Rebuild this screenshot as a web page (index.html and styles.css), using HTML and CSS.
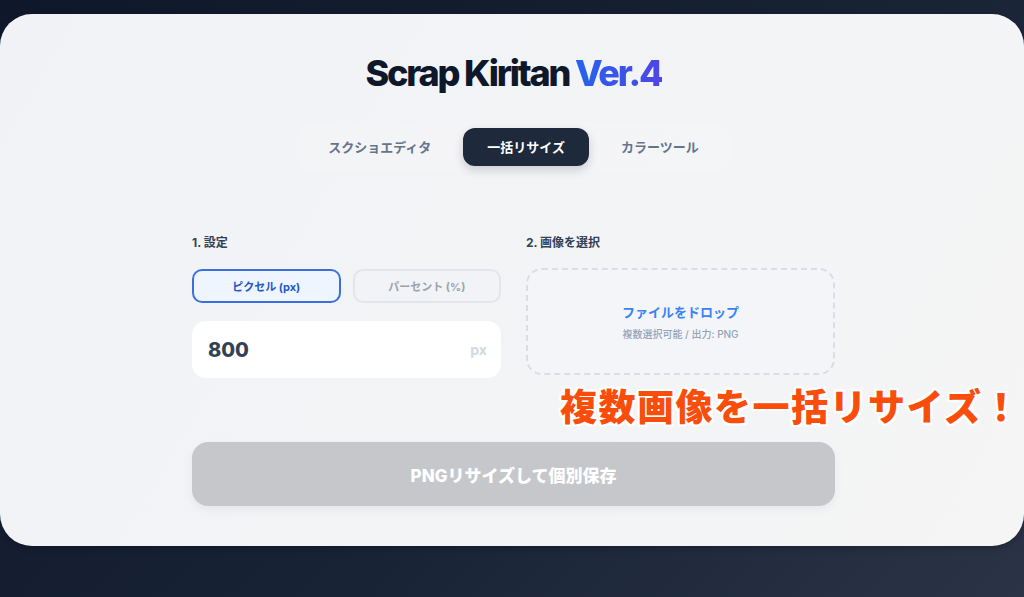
FILE: index.html
```html
<!DOCTYPE html>
<html lang="ja">
<head>
<meta charset="utf-8">
<title>Scrap Kiritan Ver.4</title>
<link rel="stylesheet" href="styles.css">
</head>
<body>
<main class="card">
  <h1 class="title">Scrap Kiritan <span class="ver">Ver.4</span></h1>
  <nav class="tabs">
    <button class="tab">スクショエディタ</button>
    <button class="tab tab-active">一括リサイズ</button>
    <button class="tab">カラーツール</button>
  </nav>
  <section class="grid">
    <div class="col">
      <div class="label">1. 設定</div>
      <div class="toggles">
        <button class="toggle toggle-on">ピクセル (px)</button>
        <button class="toggle">パーセント (%)</button>
      </div>
      <div class="input">
        <span class="input-value">800</span>
        <span class="input-unit">px</span>
      </div>
    </div>
    <div class="col">
      <div class="label">2. 画像を選択</div>
      <div class="drop">
        <div class="drop-title">ファイルをドロップ</div>
        <div class="drop-sub">複数選択可能 / 出力: PNG</div>
      </div>
    </div>
  </section>
  <button class="save">PNGリサイズして個別保存</button>
  <div class="callout">複数画像を一括リサイズ！</div>
</main>
</body>
</html>
```

FILE: styles.css
```css
html, body {
  margin: 0;
  padding: 0;
}
body {
  width: 1024px;
  height: 597px;
  overflow: hidden;
  background: linear-gradient(135deg, #0f172a 0%, #182235 55%, #2a3446 100%);
  font-family: "Inter", "Noto Sans CJK JP", sans-serif;
}
.card {
  position: relative;
  box-sizing: border-box;
  width: 1024px;
  height: 532px;
  margin-top: 14px;
  border-radius: 32px;
  background: linear-gradient(120deg, #f0f2f5 0%, #f3f4f6 60%, #f5f5f5 100%);
  padding: 39px 0 40px 3px;
  display: flex;
  flex-direction: column;
  align-items: center;
  box-shadow: 0 2px 6px rgba(0,0,0,0.25);
}
.title {
  margin: 0 0 29px;
  font-size: 36px;
  line-height: 40px;
  font-weight: 800;
  letter-spacing: -0.06em;
  color: #0f172a;
}
.ver {
  background: linear-gradient(90deg, #2563eb, #4f46e5);
  -webkit-background-clip: text;
  background-clip: text;
  color: transparent;
}
.tabs {
  display: flex;
  gap: 8px;
  padding: 6px 8px;
  border-radius: 18px;
  background: rgba(255,255,255,0.15);
}
.tab {
  border: 0;
  background: transparent;
  font-family: inherit;
  font-size: 13px;
  line-height: 18px;
  font-weight: 700;
  color: #64748b;
  padding: 10px 24px;
  border-radius: 12px;
}
.tab-active {
  background: #1e293b;
  color: #ffffff;
  box-shadow: 0 4px 10px rgba(15,23,42,0.18);
}
.grid {
  margin-top: 63px;
  width: 643px;
  display: grid;
  grid-template-columns: 1fr 1fr;
  gap: 25px;
}
.col {
  display: flex;
  flex-direction: column;
}
.label {
  font-size: 12px;
  line-height: 16px;
  font-weight: 700;
  color: #334155;
  margin-bottom: 18px;
}
.toggles {
  display: grid;
  grid-template-columns: 1fr 1fr;
  gap: 12px;
  margin-bottom: 18px;
}
.toggle {
  box-sizing: border-box;
  height: 34px;
  border: 2px solid #e2e5ea;
  background: #f1f3f6;
  border-radius: 10px;
  font-family: inherit;
  font-size: 11px;
  font-weight: 700;
  color: #9ca3af;
}
.toggle-on {
  border-color: #3b6fe0;
  background: #eef5ff;
  color: #2557c9;
}
.input {
  box-sizing: border-box;
  height: 57px;
  background: #ffffff;
  border-radius: 14px;
  padding: 0 14px 0 16px;
  display: flex;
  align-items: center;
  justify-content: space-between;
}
.input-value {
  font-size: 20px;
  font-weight: 800;
  color: #334155;
}
.input-unit {
  font-size: 14px;
  font-weight: 700;
  color: #d3d9e1;
}
.drop {
  box-sizing: border-box;
  height: 107px;
  margin-top: -1px;
  border: 2px dashed #dadde3;
  border-radius: 16px;
  background: #f3f5f8;
  display: flex;
  flex-direction: column;
  align-items: center;
  justify-content: center;
  gap: 6px;
}
.drop-title {
  font-size: 13px;
  line-height: 18px;
  font-weight: 700;
  color: #3b82f6;
}
.drop-sub {
  font-size: 10px;
  line-height: 14px;
  font-weight: 500;
  color: #94a3b8;
}
.save {
  margin-top: 64px;
  width: 643px;
  height: 64px;
  border: 0;
  border-radius: 16px;
  background: #c6c7cb;
  color: #ffffff;
  font-family: inherit;
  font-size: 17px;
  font-weight: 800;
  box-shadow: 0 4px 10px rgba(0,0,0,0.05);
}
.callout {
  position: absolute;
  left: 560px;
  top: 373px;
  font-family: "Noto Sans CJK JP", sans-serif;
  font-size: 37px;
  line-height: 37px;
  font-weight: 900;
  letter-spacing: 1.5px;
  color: #f94d0c;
  white-space: nowrap;
  text-shadow:
    2px 0 0 #fff, -2px 0 0 #fff, 0 2px 0 #fff, 0 -2px 0 #fff,
    2px 2px 0 #fff, -2px -2px 0 #fff, 2px -2px 0 #fff, -2px 2px 0 #fff,
    0 0 3px #fff;
}
```
